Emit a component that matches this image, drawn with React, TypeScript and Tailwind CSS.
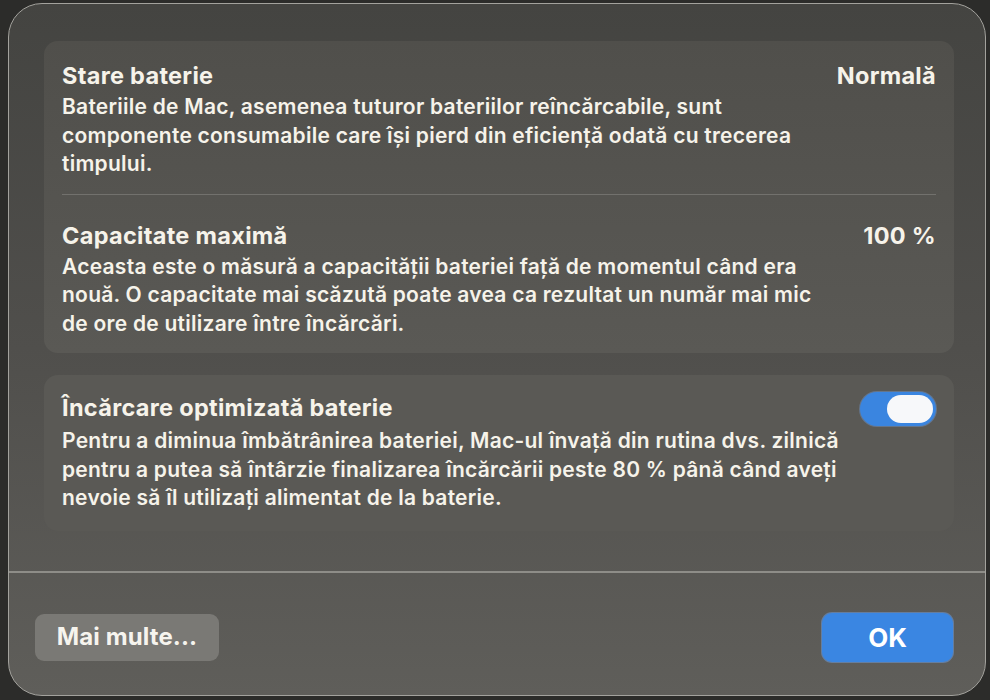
import React from "react";

const font = { fontFamily: "Inter, 'Noto Sans', 'Liberation Sans', sans-serif" };

function Toggle() {
  return (
    <div className="relative h-[34px] w-[76px] shrink-0 rounded-full bg-[#3a85e0] shadow-[0_0_0_1px_rgba(120,170,240,0.35)]">
      <div className="absolute right-[3px] top-[3px] h-[28px] w-[46px] rounded-full bg-[#f7f8fa]" />
    </div>
  );
}

const title = "text-[23.5px] font-bold leading-[28px] tracking-[0.3px]";
const body = "text-[21px] font-semibold leading-[28.5px] tracking-[0.25px]";

export default function App() {
  return (
    <div className="h-[700px] w-[990px] overflow-hidden bg-[#2c2c2a]" style={font}>
      <div className="ml-[8px] mr-[4px] mt-[3px] flex h-[693px] flex-col rounded-[34px] border-[1.5px] border-[#a3a29d] bg-gradient-to-b from-[#444441] via-[#504f4c] to-[#5f5e5a] text-[#f6f3ea]">
        <div className="flex flex-col gap-[22px] pl-[35px] pr-[31px] pt-[37px]">
          {/* Battery status + capacity */}
          <div className="rounded-[14px] bg-gradient-to-b from-[#504f4b] to-[#5a5955] px-[18px] pb-[15px] pt-[21px]">
            <div className="flex items-start justify-between">
              <div className={title}>Stare baterie</div>
              <div className={title}>Normală</div>
            </div>
            <p className={`mt-[3px] ${body}`}>
              Bateriile de Mac, asemenea tuturor bateriilor reîncărcabile, sunt
              <br />
              componente consumabile care își pierd din eficiență odată cu trecerea
              <br />
              timpului.
            </p>
            <div className="mt-[15px] h-px bg-[#72716d]" />
            <div className="mt-[27px] flex items-start justify-between">
              <div className={title}>Capacitate maximă</div>
              <div className={title}>100 %</div>
            </div>
            <p className={`mt-[3px] ${body}`}>
              Aceasta este o măsură a capacității bateriei față de momentul când era
              <br />
              nouă. O capacitate mai scăzută poate avea ca rezultat un număr mai mic
              <br />
              de ore de utilizare între încărcări.
            </p>
          </div>

          {/* Optimised charging */}
          <div className="rounded-[14px] bg-[#5a5955] px-[18px] pb-[18px] pt-[17px]">
            <div className="flex items-start justify-between">
              <div className={`mt-[2px] ${title}`}>Încărcare optimizată baterie</div>
              <Toggle />
            </div>
            <p className={`mt-[1px] ${body}`}>
              Pentru a diminua îmbătrânirea bateriei, Mac-ul învață din rutina dvs. zilnică
              <br />
              pentru a putea să întârzie finalizarea încărcării peste 80 % până când aveți
              <br />
              nevoie să îl utilizați alimentat de la baterie.
            </p>
          </div>
        </div>

        <div className="mt-[40px] h-[2px] bg-[#8e8d88]" />

        <div className="flex items-center justify-between pl-[26px] pr-[32px] pt-[40px]">
          <button className="h-[47px] w-[184px] rounded-[9px] bg-[#7a7975] text-[24px] font-bold tracking-[0.1px] text-[#f6f4ee]">
            Mai multe...
          </button>
          <button className="h-[49px] w-[131px] rounded-[10px] bg-[#3a86e2] text-[26px] font-bold text-white shadow-[0_0_0_1px_rgba(110,160,230,0.5)]">
            OK
          </button>
        </div>
      </div>
    </div>
  );
}
